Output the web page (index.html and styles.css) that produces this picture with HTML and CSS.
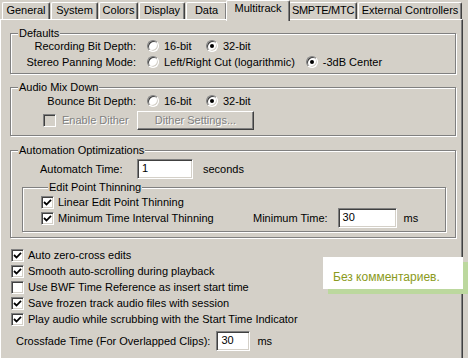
FILE: index.html
```html
<!DOCTYPE html>
<html lang="en">
<head>
    <meta charset="UTF-8">
    <title>Preferences - Multitrack</title>
    <link rel="stylesheet" href="styles.css">
</head>
<body>
    <div class="tabs">
        <div class="tab w-general">General</div>
        <div class="tab w-system">System</div>
        <div class="tab w-colors">Colors</div>
        <div class="tab w-display">Display</div>
        <div class="tab w-data">Data</div>
        <div class="tab active w-multi">Multitrack</div>
        <div class="tab w-smpte">SMPTE/MTC</div>
        <div class="tab w-ext">External Controllers</div>
    </div>

    <div class="panel">
        <div class="group defaults">
            <div class="group-title">Defaults</div>
            <div class="row">
                <span class="label">Recording Bit Depth:</span>
                <span class="option"><span class="radio"></span>16-bit</span>
                <span class="option"><span class="radio on"></span>32-bit</span>
            </div>
            <div class="row">
                <span class="label">Stereo Panning Mode:</span>
                <span class="option"><span class="radio"></span>Left/Right Cut (logarithmic)</span>
                <span class="option"><span class="radio on"></span>-3dB Center</span>
            </div>
        </div>

        <div class="group mixdown">
            <div class="group-title">Audio Mix Down</div>
            <div class="row">
                <span class="label">Bounce Bit Depth:</span>
                <span class="option"><span class="radio"></span>16-bit</span>
                <span class="option"><span class="radio on"></span>32-bit</span>
            </div>
            <div class="row dither-row">
                <span class="label left dither">
                    <span class="check disabled"></span>
                    <span class="disabled-text">Enable Dither</span>
                </span>
                <div class="button disabled-text">Dither Settings...</div>
            </div>
        </div>

        <div class="group automation">
            <div class="group-title">Automation Optimizations</div>
            <div class="row field-row">
                <span class="label left automatch">Automatch Time:</span>
                <div class="field w-automatch">1</div>
                <span class="unit">seconds</span>
            </div>

            <div class="group inner">
                <div class="group-title">Edit Point Thinning</div>
                <div class="row">
                    <span class="check-line"><span class="check on"><svg viewBox="0 0 9 9" width="9" height="9"><path d="M1 4 L3.5 6.5 L8 1.8" fill="none" stroke="#000" stroke-width="1.8"/></svg></span>Linear Edit Point Thinning</span>
                </div>
                <div class="row field-row tight">
                    <span class="check-line wide"><span class="check on"><svg viewBox="0 0 9 9" width="9" height="9"><path d="M1 4 L3.5 6.5 L8 1.8" fill="none" stroke="#000" stroke-width="1.8"/></svg></span>Minimum Time Interval Thinning</span>
                    <span class="field-label">Minimum Time:</span>
                    <div class="field w-mintime">30</div>
                    <span class="unit short">ms</span>
                </div>
            </div>
        </div>

        <div class="options">
            <div class="row"><span class="check-line"><span class="check on"><svg viewBox="0 0 9 9" width="9" height="9"><path d="M1 4 L3.5 6.5 L8 1.8" fill="none" stroke="#000" stroke-width="1.8"/></svg></span>Auto zero-cross edits</span></div>
            <div class="row"><span class="check-line"><span class="check on"><svg viewBox="0 0 9 9" width="9" height="9"><path d="M1 4 L3.5 6.5 L8 1.8" fill="none" stroke="#000" stroke-width="1.8"/></svg></span>Smooth auto-scrolling during playback</span></div>
            <div class="row"><span class="check-line"><span class="check"></span>Use BWF Time Reference as insert start time</span></div>
            <div class="row"><span class="check-line"><span class="check on"><svg viewBox="0 0 9 9" width="9" height="9"><path d="M1 4 L3.5 6.5 L8 1.8" fill="none" stroke="#000" stroke-width="1.8"/></svg></span>Save frozen track audio files with session</span></div>
            <div class="row"><span class="check-line"><span class="check on"><svg viewBox="0 0 9 9" width="9" height="9"><path d="M1 4 L3.5 6.5 L8 1.8" fill="none" stroke="#000" stroke-width="1.8"/></svg></span>Play audio while scrubbing with the Start Time Indicator</span></div>
        </div>

        <div class="row field-row crossfade">
            <span class="field-label">Crossfade Time (For Overlapped Clips):</span>
            <div class="field w-crossfade">30</div>
            <span class="unit short">ms</span>
        </div>
    </div>

    <div class="note">Без комментариев.</div>
</body>
</html>
```

FILE: styles.css
```css
* {
    box-sizing: border-box;
}

body {
    margin: 0;
    width: 468px;
    height: 358px;
    overflow: hidden;
    position: relative;
    background: #d4d0c8;
    color: #000;
    font-family: "Liberation Sans", Arial, sans-serif;
    font-size: 11px;
    line-height: 13px;
}

/* Tab strip */
.tabs {
    display: flex;
    align-items: flex-end;
    gap: 1px;
    height: 19px;
    padding-left: 2px;
}

.tab {
    height: 17px;
    display: flex;
    align-items: center;
    justify-content: center;
    padding-bottom: 1px;
    white-space: nowrap;
    border-top: 1px solid #fff;
    border-left: 1px solid #fff;
    border-right: 1px solid #404040;
    border-radius: 2px 2px 0 0;
    box-shadow: inset -1px 0 #808080;
}

.tab.active {
    position: relative;
    z-index: 1;
    height: 21px;
    margin: 0 -2px -2px;
    padding-bottom: 5px;
    background: #d4d0c8;
}

.w-general { width: 48px; }
.w-system { width: 47px; }
.w-colors { width: 39px; }
.w-display { width: 46px; }
.w-data { width: 41px; }
.w-multi { width: 64px; }
.w-smpte { width: 68px; letter-spacing: -0.3px; }
.w-ext { width: 104px; }

/* Tab page */
.panel {
    width: 463px;
    height: 339px;
    padding: 0 6px 0 9px;
    border-top: 1px solid #fff;
    border-left: 1px solid #fff;
    border-right: 1px solid #404040;
    box-shadow: inset -1px 0 #808080;
}

/* Etched group boxes */
.group {
    border: 1px solid #808080;
    box-shadow: inset 1px 1px #fff, 1px 1px #fff;
}

.group-title {
    width: fit-content;
    margin: -7px 0 0 7px;
    padding: 0 1px;
    background: #d4d0c8;
    white-space: nowrap;
}

.defaults {
    margin-top: 13px;
    padding-bottom: 3px;
}

.defaults .group-title {
    margin-bottom: -2px;
}

.mixdown {
    margin-top: 13px;
    padding-bottom: 5px;
}

.mixdown .group-title {
    margin-bottom: -1px;
}

.automation {
    margin-top: 14px;
    padding-bottom: 5px;
}

.inner {
    margin: 8px 9px 0 11px;
    padding: 0 0 3px 18px;
}

.row {
    display: flex;
    align-items: center;
    height: 16px;
    white-space: nowrap;
}

.label {
    width: 126px;
    flex: none;
    text-align: right;
    padding-right: 1px;
}

.label.left {
    text-align: left;
    display: flex;
    align-items: center;
}

.option {
    display: flex;
    align-items: center;
    min-width: 48px;
    margin-left: 10px;
}

.option + .option {
    margin-left: 11px;
}

.radio {
    width: 12px;
    height: 12px;
    margin-right: 5px;
    flex: none;
    border-radius: 50%;
    background: #fff;
    border: 1px solid;
    border-color: #808080 #fff #fff #808080;
    box-shadow: inset 1px 1px #404040, inset -1px -1px #d4d0c8;
    display: flex;
    align-items: center;
    justify-content: center;
}

.radio.on::after {
    content: "";
    width: 4px;
    height: 4px;
    border-radius: 50%;
    background: #000;
}

.check {
    width: 13px;
    height: 13px;
    flex: none;
    margin-right: 4px;
    background: #fff;
    border: 1px solid;
    border-color: #808080 #fff #fff #808080;
    box-shadow: inset 1px 1px #404040, inset -1px -1px #d4d0c8;
    display: flex;
    align-items: center;
    justify-content: center;
}

.check.disabled {
    background: #d4d0c8;
    margin-right: 6px;
}

.check-line {
    display: flex;
    align-items: center;
}

.check-line.wide {
    width: 212px;
}

.disabled-text {
    color: #808080;
    text-shadow: 1px 1px #fff;
}

.dither-row {
    height: 19px;
    margin-top: 2px;
}

.dither {
    padding-left: 32px;
}

.button {
    width: 117px;
    height: 19px;
    display: flex;
    align-items: center;
    justify-content: center;
    border: 1px solid;
    border-color: #fff #404040 #404040 #fff;
    box-shadow: inset -1px -1px #808080;
}

.field-row {
    height: 20px;
}

.automation > .field-row {
    margin-top: 2px;
}

.automatch {
    padding-left: 29px;
}

.field {
    height: 20px;
    padding: 2px 0 0 4px;
    flex: none;
    background: #fff;
    border: 1px solid;
    border-color: #808080 #fff #fff #808080;
    box-shadow: inset 1px 1px #404040, inset -1px -1px #d4d0c8;
}

.w-automatch { width: 56px; }
.w-mintime { width: 59px; }
.w-crossfade { width: 34px; }

.unit {
    margin-left: 10px;
}

.unit.short {
    margin-left: 7px;
}

.field-label {
    margin-right: 10px;
}

.tight {
    margin-top: -2px;
}

.options {
    margin: 9px 0 0 1px;
}

.crossfade {
    margin: 4px 0 0 6px;
}

.crossfade .field-label {
    margin-right: 6px;
}

/* Pasted comment note */
.note {
    position: absolute;
    left: 323px;
    top: 257px;
    width: 140px;
    height: 32px;
    padding: 13px 0 0 10px;
    background: #fff;
    color: #8a9a20;
    font-size: 12px;
    line-height: 14px;
    box-shadow: 5px 5px 0 #bcd89e;
}
```
